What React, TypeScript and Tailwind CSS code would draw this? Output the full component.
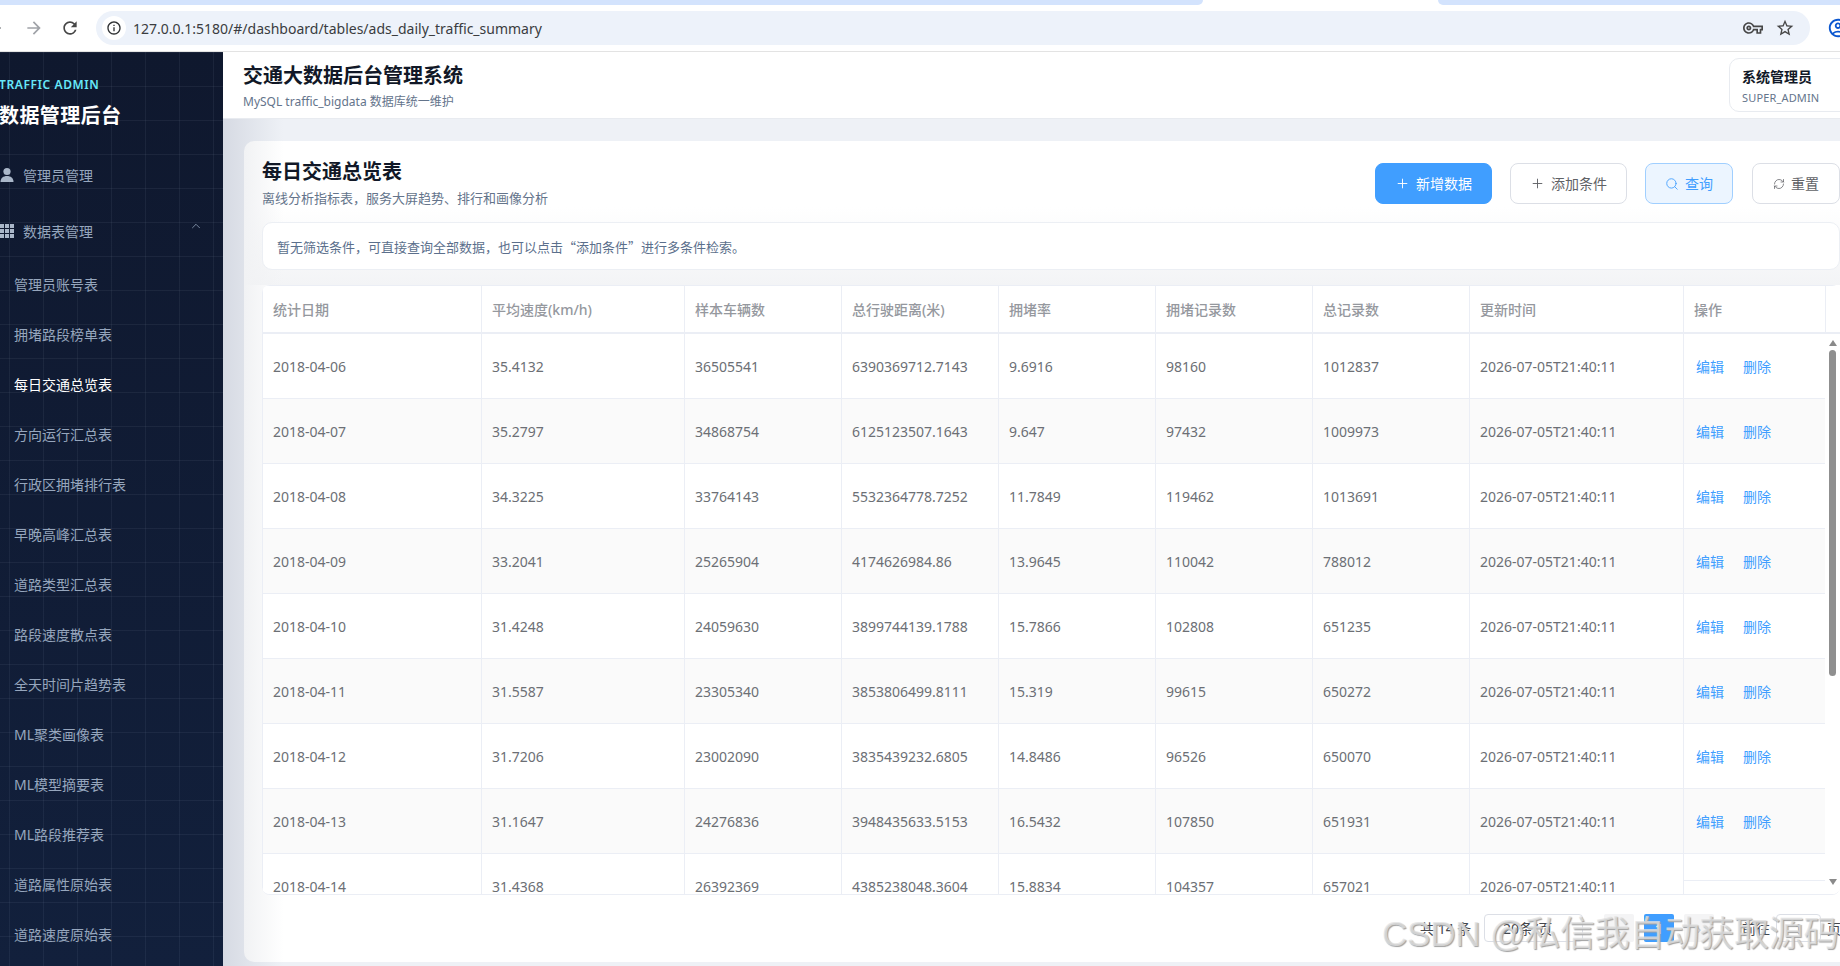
import { ChevronUp, Plus, Search, RefreshCw } from 'lucide-react';
import { MdArrowBack, MdArrowForward, MdRefresh, MdInfoOutline, MdOutlineVpnKey, MdStarBorder, MdOutlineAccountCircle } from 'react-icons/md';

const subMenus = [
  '管理员账号表',
  '拥堵路段榜单表',
  '每日交通总览表',
  '方向运行汇总表',
  '行政区拥堵排行表',
  '早晚高峰汇总表',
  '道路类型汇总表',
  '路段速度散点表',
  '全天时间片趋势表',
  'ML聚类画像表',
  'ML模型摘要表',
  'ML路段推荐表',
  '道路属性原始表',
  '道路速度原始表',
];

const columns = [
  { label: '统计日期', width: 'w-[219px]' },
  { label: '平均速度(km/h)', width: 'w-[203px]' },
  { label: '样本车辆数', width: 'w-[157px]' },
  { label: '总行驶距离(米)', width: 'w-[157px]' },
  { label: '拥堵率', width: 'w-[157px]' },
  { label: '拥堵记录数', width: 'w-[157px]' },
  { label: '总记录数', width: 'w-[157px]' },
  { label: '更新时间', width: 'w-[214px]' },
];

const rows = [
  ['2018-04-06', '35.4132', '36505541', '6390369712.7143', '9.6916', '98160', '1012837'],
  ['2018-04-07', '35.2797', '34868754', '6125123507.1643', '9.647', '97432', '1009973'],
  ['2018-04-08', '34.3225', '33764143', '5532364778.7252', '11.7849', '119462', '1013691'],
  ['2018-04-09', '33.2041', '25265904', '4174626984.86', '13.9645', '110042', '788012'],
  ['2018-04-10', '31.4248', '24059630', '3899744139.1788', '15.7866', '102808', '651235'],
  ['2018-04-11', '31.5587', '23305340', '3853806499.8111', '15.319', '99615', '650272'],
  ['2018-04-12', '31.7206', '23002090', '3835439232.6805', '14.8486', '96526', '650070'],
  ['2018-04-13', '31.1647', '24276836', '3948435633.5153', '16.5432', '107850', '651931'],
  ['2018-04-14', '31.4368', '26392369', '4385238048.3604', '15.8834', '104357', '657021'],
];

function BrowserBar() {
  return (
    <div className="relative h-[52px] shrink-0 border-b border-[#e3e3e3] bg-white">
      <div className="flex h-[5px] justify-between">
        <div className="w-[1203px] rounded-br-lg bg-[#d3e3fd]" />
        <div className="w-[402px] rounded-bl-lg bg-[#d3e3fd]" />
      </div>
      <div className="mt-[6px] flex h-[34px] items-center">
        <MdArrowBack className="ml-[-16px] shrink-0 text-[20px] text-[#5f6368]" />
        <MdArrowForward className="ml-[20px] shrink-0 text-[20px] text-[#a0a3a8]" />
        <MdRefresh className="ml-[16px] shrink-0 text-[20px] text-[#474747]" />
        <div className="ml-[16px] flex h-[34px] w-[1714px] shrink-0 items-center rounded-full bg-[#edf2fa] pl-[6px] pr-[15px]">
          <span className="flex h-[24px] w-[24px] items-center justify-center rounded-full bg-white">
            <MdInfoOutline className="text-[16px] text-[#2f3133]" />
          </span>
          <span className="ml-[7px] text-[14px] text-[#3a3c40]">127.0.0.1:5180/#/dashboard/tables/ads_daily_traffic_summary</span>
          <MdOutlineVpnKey className="ml-auto text-[20px] text-[#474747]" />
          <MdStarBorder className="ml-[12px] text-[20px] text-[#474747]" />
        </div>
        <MdOutlineAccountCircle className="ml-[17px] shrink-0 text-[22px] text-[#0b57d0]" />
      </div>
    </div>
  );
}

function Sidebar() {
  return (
    <aside className="ml-[-25px] flex w-[248px] shrink-0 flex-col bg-[#0f1a30] bg-[linear-gradient(rgba(148,163,184,0.09)_1px,transparent_1px),linear-gradient(90deg,rgba(148,163,184,0.09)_1px,transparent_1px),linear-gradient(180deg,#0f182e,#12203c)] bg-[size:34px_34px,34px_34px,100%_100%] pl-[24px]">
      <div className="h-[95px] pt-[23px]">
        <div className="text-[12px] font-semibold leading-[20px] tracking-[0.6px] text-[#67e8f9]">TRAFFIC ADMIN</div>
        <div className="mt-[7px] text-[20px] font-bold leading-[28px] tracking-[0.4px] text-white">数据管理后台</div>
      </div>
      <div className="flex h-[56px] items-center text-[14px] text-[#96a6bd]">
        <svg viewBox="0 0 16 16" className="h-[16px] w-[16px] shrink-0 fill-[#aab7c9]">
          <circle cx="8" cy="4.5" r="3.6" />
          <path d="M1.5 15c0-4 2.8-6 6.5-6s6.5 2 6.5 6z" />
        </svg>
        <span className="ml-[8px]">管理员管理</span>
      </div>
      <div className="relative flex h-[56px] items-center text-[14px] text-[#96a6bd]">
        <svg viewBox="0 0 16 16" className="h-[16px] w-[16px] shrink-0 fill-[#aab7c9]">
          <path d="M1 1h4v4H1zM6 1h4v4H6zM11 1h4v4h-4zM1 6h4v4H1zM6 6h4v4H6zM11 6h4v4h-4zM1 11h4v4H1zM6 11h4v4H6zM11 11h4v4h-4z" />
        </svg>
        <span className="ml-[8px]">数据表管理</span>
        <ChevronUp className="absolute left-[190px] top-[16px] h-[14px] w-[14px] text-[#9fb0c7]" strokeWidth={1.25} />
      </div>
      <div className="pl-[15px]">
        {subMenus.map((name) => (
          <div key={name} className={`flex h-[50px] items-center text-[14px] ${name === '每日交通总览表' ? 'text-white' : 'text-[#96a6bd]'}`}>
            {name}
          </div>
        ))}
      </div>
    </aside>
  );
}

function ToolButton({ className, icon, label }: { className: string; icon: React.ReactNode; label: string }) {
  return (
    <button className={`flex h-[41px] items-center justify-center gap-[6px] rounded-[8px] border text-[14px] ${className}`}>
      {icon}
      {label}
    </button>
  );
}

function DataTable() {
  return (
    <div className="relative mt-[15px] h-[610px] w-[1578px] overflow-hidden rounded-[8px] border-b border-[#ebeef5] bg-white">
      <div className="flex h-[49px] border-b-2 border-l border-t border-[#ebeef5]">
        {columns.map((c) => (
          <div key={c.label} className={`flex items-center border-r border-[#ebeef5] pl-[10px] text-[14px] font-medium text-[#95989e] ${c.width}`}>
            {c.label}
          </div>
        ))}
        <div className="flex w-[142px] items-center border-r border-[#ebeef5] pl-[10px] text-[14px] font-medium text-[#95989e]">操作</div>
      </div>
      {rows.map((row, i) => (
        <div key={row[0]} className={`flex h-[65px] border-b border-l border-[#ebeef5] ${i % 2 === 1 ? 'bg-[#fafafa]' : 'bg-white'}`}>
          {columns.map((c, j) => (
            <div key={c.label} className={`flex items-center border-r border-[#ebeef5] pl-[10px] text-[14px] text-[#6c6f75] ${c.width}`}>
              {j < 7 ? row[j] : '2026-07-05T21:40:11'}
            </div>
          ))}
          {i < 8 ? (
            <div className="flex w-[142px] items-center gap-[19px] border-r border-[#ebeef5] pl-[12px] text-[14px] text-[#409eff]">
              <span>编辑</span>
              <span>删除</span>
            </div>
          ) : (
            <div className="w-[142px] border-r border-[#ebeef5]">
              <div className="h-[27px] border-b border-[#ebeef5]" />
            </div>
          )}
        </div>
      ))}
      <div className="absolute right-0 top-[49px] h-[561px] w-[15px] bg-white">
        <div className="mx-auto mt-[6px] h-0 w-0 border-x-[4px] border-b-[6px] border-x-transparent border-b-[#8a8a8a]" />
        <div className="mx-auto mt-[4px] h-[326px] w-[7px] rounded-full bg-[#8f8f8f]" />
        <div className="mx-auto mt-[203px] h-0 w-0 border-x-[4px] border-t-[6px] border-x-transparent border-t-[#8a8a8a]" />
      </div>
    </div>
  );
}

function Pagination() {
  return (
    <div className="relative flex h-[67px] items-start whitespace-nowrap pl-[1158px] pt-[19px] text-[14px] text-[#44464b]">
      <span className="flex h-[28px] w-[48px] shrink-0 items-center">共 14 条</span>
      <div className="ml-[16px] flex h-[28px] w-[99px] shrink-0 items-center rounded-[4px] border border-[#dcdfe6] pl-[18px]">20条/页</div>
      <div className="ml-[21px] flex h-[28px] w-[30px] shrink-0 items-center justify-center rounded-[2px] bg-[#f4f4f5] text-[#c0c4cc]">‹</div>
      <div className="ml-[10px] flex h-[28px] w-[30px] shrink-0 items-center justify-center rounded-[2px] bg-[#409eff] font-semibold text-white">1</div>
      <div className="ml-[10px] flex h-[28px] w-[30px] shrink-0 items-center justify-center rounded-[2px] bg-[#f4f4f5] text-[#c0c4cc]">›</div>
      <span className="ml-[28px] flex h-[28px] shrink-0 items-center">前往</span>
      <div className="ml-[6px] flex h-[28px] w-[45px] shrink-0 items-center justify-center rounded-[4px] border border-[#dcdfe6]">1</div>
      <span className="ml-[6px] flex h-[28px] shrink-0 items-center">页</span>
    </div>
  );
}

export default function App() {
  return (
    <div className="relative flex h-[966px] w-[1840px] flex-col overflow-hidden bg-white font-['Noto_Sans','Noto_Sans_CJK_SC',sans-serif]">
      <BrowserBar />
      <div className="flex min-h-0 flex-1">
        <Sidebar />
        <main className="flex w-[1656px] shrink-0 flex-col bg-[linear-gradient(90deg,#d6dae3,#eef1f6_60px)]">
          <header className="flex h-[67px] shrink-0 items-center justify-between border-b border-[#e8ebf0] bg-white pl-[20px] pr-[20px]">
            <div className="mt-[2px]">
              <div className="text-[20px] font-bold leading-[28px] text-[#111827]">交通大数据后台管理系统</div>
              <div className="mt-[3px] text-[12px] leading-[18px] text-[#64748b]">MySQL traffic_bigdata 数据库统一维护</div>
            </div>
            <div className="h-[54px] w-[130px] rounded-[10px] border border-[#e8ebf0] px-[12px] pt-[8px]">
              <div className="text-[14px] font-semibold leading-[20px] text-[#111827]">系统管理员</div>
              <div className="mt-[3px] text-[11px] leading-[16px] tracking-[0.15px] text-[#64748b]">SUPER_ADMIN</div>
            </div>
          </header>
          <div className="flex-1 px-[21px] pb-[4px] pt-[22px]">
            <section className="h-[821px] rounded-[10px] bg-[linear-gradient(90deg,#f1f2f4,rgba(255,255,255,0)_40px),linear-gradient(180deg,#ffffff_8%,#f3f4f6_17.5%,#ffffff_17.6%)] px-[18px] pt-[22px]">
              <div className="flex h-[41px] items-start justify-between">
                <div className="mt-[-5px]">
                  <h1 className="text-[20px] font-bold leading-[28px] text-[#111827]">每日交通总览表</h1>
                  <p className="mt-[3px] text-[13px] leading-[18px] text-[#64748b]">离线分析指标表，服务大屏趋势、排行和画像分析</p>
                </div>
                <div className="flex gap-[18px]">
                  <ToolButton className="w-[117px] border-[#409eff] bg-[#409eff] text-white" icon={<Plus className="h-[15px] w-[15px]" strokeWidth={1.5} />} label="新增数据" />
                  <ToolButton className="w-[117px] border-[#dcdfe6] bg-white text-[#606266]" icon={<Plus className="h-[15px] w-[15px]" strokeWidth={1.5} />} label="添加条件" />
                  <ToolButton className="w-[88px] border-[#a0cfff] bg-[#ecf5ff] text-[#409eff]" icon={<Search className="h-[14px] w-[14px]" strokeWidth={1.5} />} label="查询" />
                  <ToolButton className="ml-[1px] w-[88px] border-[#dcdfe6] bg-white text-[#606266]" icon={<RefreshCw className="h-[12px] w-[12px]" strokeWidth={1.5} />} label="重置" />
                </div>
              </div>
              <div className="mt-[18px] flex h-[48px] w-[1578px] items-center rounded-[10px] border border-[#eceff4] bg-white pl-[14px] pt-[2px] font-['Noto_Sans_CJK_SC','Noto_Sans',sans-serif] text-[13px] text-[#5b6f8c]">
                暂无筛选条件，可直接查询全部数据，也可以点击“添加条件”进行多条件检索。
              </div>
              <DataTable />
              <Pagination />
            </section>
          </div>
        </main>
      </div>
      <div className="pointer-events-none absolute left-[1382px] top-[912px] whitespace-nowrap font-['Liberation_Sans','Noto_Sans_CJK_SC',sans-serif] text-[35px] leading-[44px] tracking-[-0.2px] text-[#e2e2e2]/75 [text-shadow:1px_1px_1px_#a0a0a0]">
        CSDN @私信我自动获取源码
      </div>
    </div>
  );
}
